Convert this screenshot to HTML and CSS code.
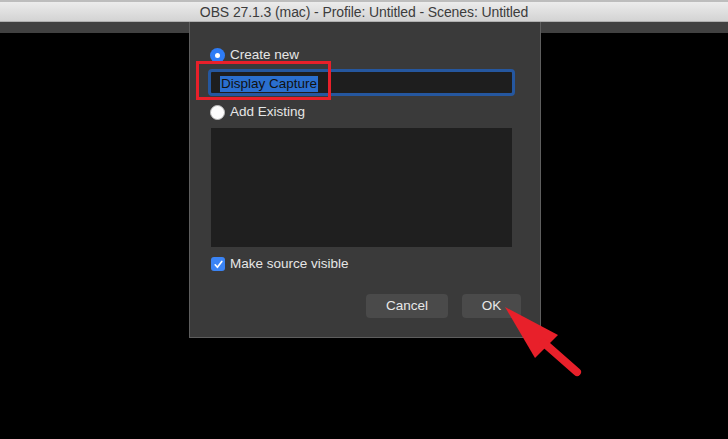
FILE: index.html
```html
<!DOCTYPE html>
<html>
<head>
<meta charset="utf-8">
<link rel="stylesheet" href="styles.css">
</head>
<body>
<div class="screen">
  <div class="titlebar">OBS 27.1.3 (mac) - Profile: Untitled - Scenes: Untitled</div>
  <div class="toolstrip"></div>

  <div class="dialog">
    <label class="radio-row">
      <span class="radio on"></span>
      <span class="label">Create new</span>
    </label>
    <div class="input"><span class="sel">Display Capture</span></div>
    <label class="radio-row second">
      <span class="radio off"></span>
      <span class="label">Add Existing</span>
    </label>
    <div class="listbox"></div>
    <label class="check-row">
      <span class="check">
        <svg width="13" height="13" viewBox="0 0 13 13"><path d="M3.2 6.8 L5.4 9.3 L9.8 3.4" fill="none" stroke="#fff" stroke-width="1.7" stroke-linecap="round" stroke-linejoin="round"/></svg>
      </span>
      <span class="label">Make source visible</span>
    </label>
    <div class="buttons">
      <div class="btn cancel">Cancel</div>
      <div class="btn ok">OK</div>
    </div>
  </div>

  <div class="highlight-box"></div>
  <svg class="arrow" width="90" height="85" viewBox="500 300 90 85">
    <polygon points="505,307 535,358 558,335" fill="#e8202a"/>
    <line x1="544" y1="343" x2="577" y2="372" stroke="#e8202a" stroke-width="8" stroke-linecap="round"/>
  </svg>
</div>
</body>
</html>
```

FILE: styles.css
```css
* { box-sizing: border-box; }
html, body { margin: 0; padding: 0; background: #000; }
body {
  width: 728px;
  height: 439px;
  overflow: hidden;
  font-family: "Liberation Sans", Arial, sans-serif;
}
.screen {
  position: relative;
  width: 728px;
  height: 439px;
  background: #000;
}
.titlebar {
  height: 22px;
  border-top: 2px solid #bdbdbd;
  background: linear-gradient(#ececec, #d3d3d3);
  color: #3c3c3c;
  font-size: 14px;
  line-height: 20px;
  text-align: center;
  letter-spacing: -0.1px;
  border-bottom: 1px solid #b0b0b0;
}
.toolstrip {
  height: 11px;
  background: #414141;
}
.dialog {
  position: absolute;
  left: 189px;
  top: 22px;
  width: 352px;
  height: 316px;
  background: #3a3a3a;
  border-left: 1px solid #5e5e5e;
  border-right: 1px solid #5e5e5e;
  border-bottom: 1px solid #5e5e5e;
  padding: 25px 0 0 20px;
  display: flex;
  flex-direction: column;
  color: #e6e6e6;
  font-size: 13.5px;
}
.radio-row, .check-row {
  display: flex;
  align-items: center;
  gap: 5px;
  height: 16px;
}
.radio {
  width: 15px;
  height: 15px;
  border-radius: 50%;
  display: flex;
  align-items: center;
  justify-content: center;
  flex: none;
}
.radio.on { background: #2e7cf6; }
.radio.on::after {
  content: "";
  width: 5px;
  height: 5px;
  border-radius: 50%;
  background: #fff;
}
.radio.off { background: #fdfdfd; border: 1px solid #bbb; }
.label { line-height: 16px; }
.input {
  margin-top: 6px;
  margin-left: -2px;
  width: 307px;
  height: 27px;
  border: 3px solid #25579f;
  border-radius: 4px;
  background: #1e1e1e;
  padding: 2px 0 0 9px;
  display: flex;
  align-items: center;
}
.sel {
  background: #2a6fcf;
  color: #111;
  line-height: 16px;
  font-size: 13.5px;
  padding: 0 1px;
}
.radio-row.second { margin-top: 8px; }
.listbox {
  margin-top: 8px;
  margin-left: 1px;
  width: 301px;
  height: 119px;
  background: #1f1f1f;
}
.check-row { margin-top: 9px; margin-left: 1px; gap: 5px; }
.check {
  width: 14px;
  height: 14px;
  border-radius: 3px;
  background: #3b84f5;
  display: flex;
  align-items: center;
  justify-content: center;
  flex: none;
}
.check svg { display: block; }
.buttons {
  display: flex;
  justify-content: flex-end;
  gap: 14px;
  margin-top: 22px;
  padding-right: 19px;
}
.btn {
  height: 24px;
  border-radius: 4px;
  background: #4a4a4a;
  color: #e8e8e8;
  font-size: 13.5px;
  line-height: 24px;
  text-align: center;
}
.btn.cancel { width: 82px; }
.btn.ok { width: 59px; }
.highlight-box {
  position: absolute;
  left: 196px;
  top: 61px;
  width: 135px;
  height: 39px;
  border: 3px solid #e8202a;
}
.arrow {
  position: absolute;
  left: 500px;
  top: 300px;
}
```
